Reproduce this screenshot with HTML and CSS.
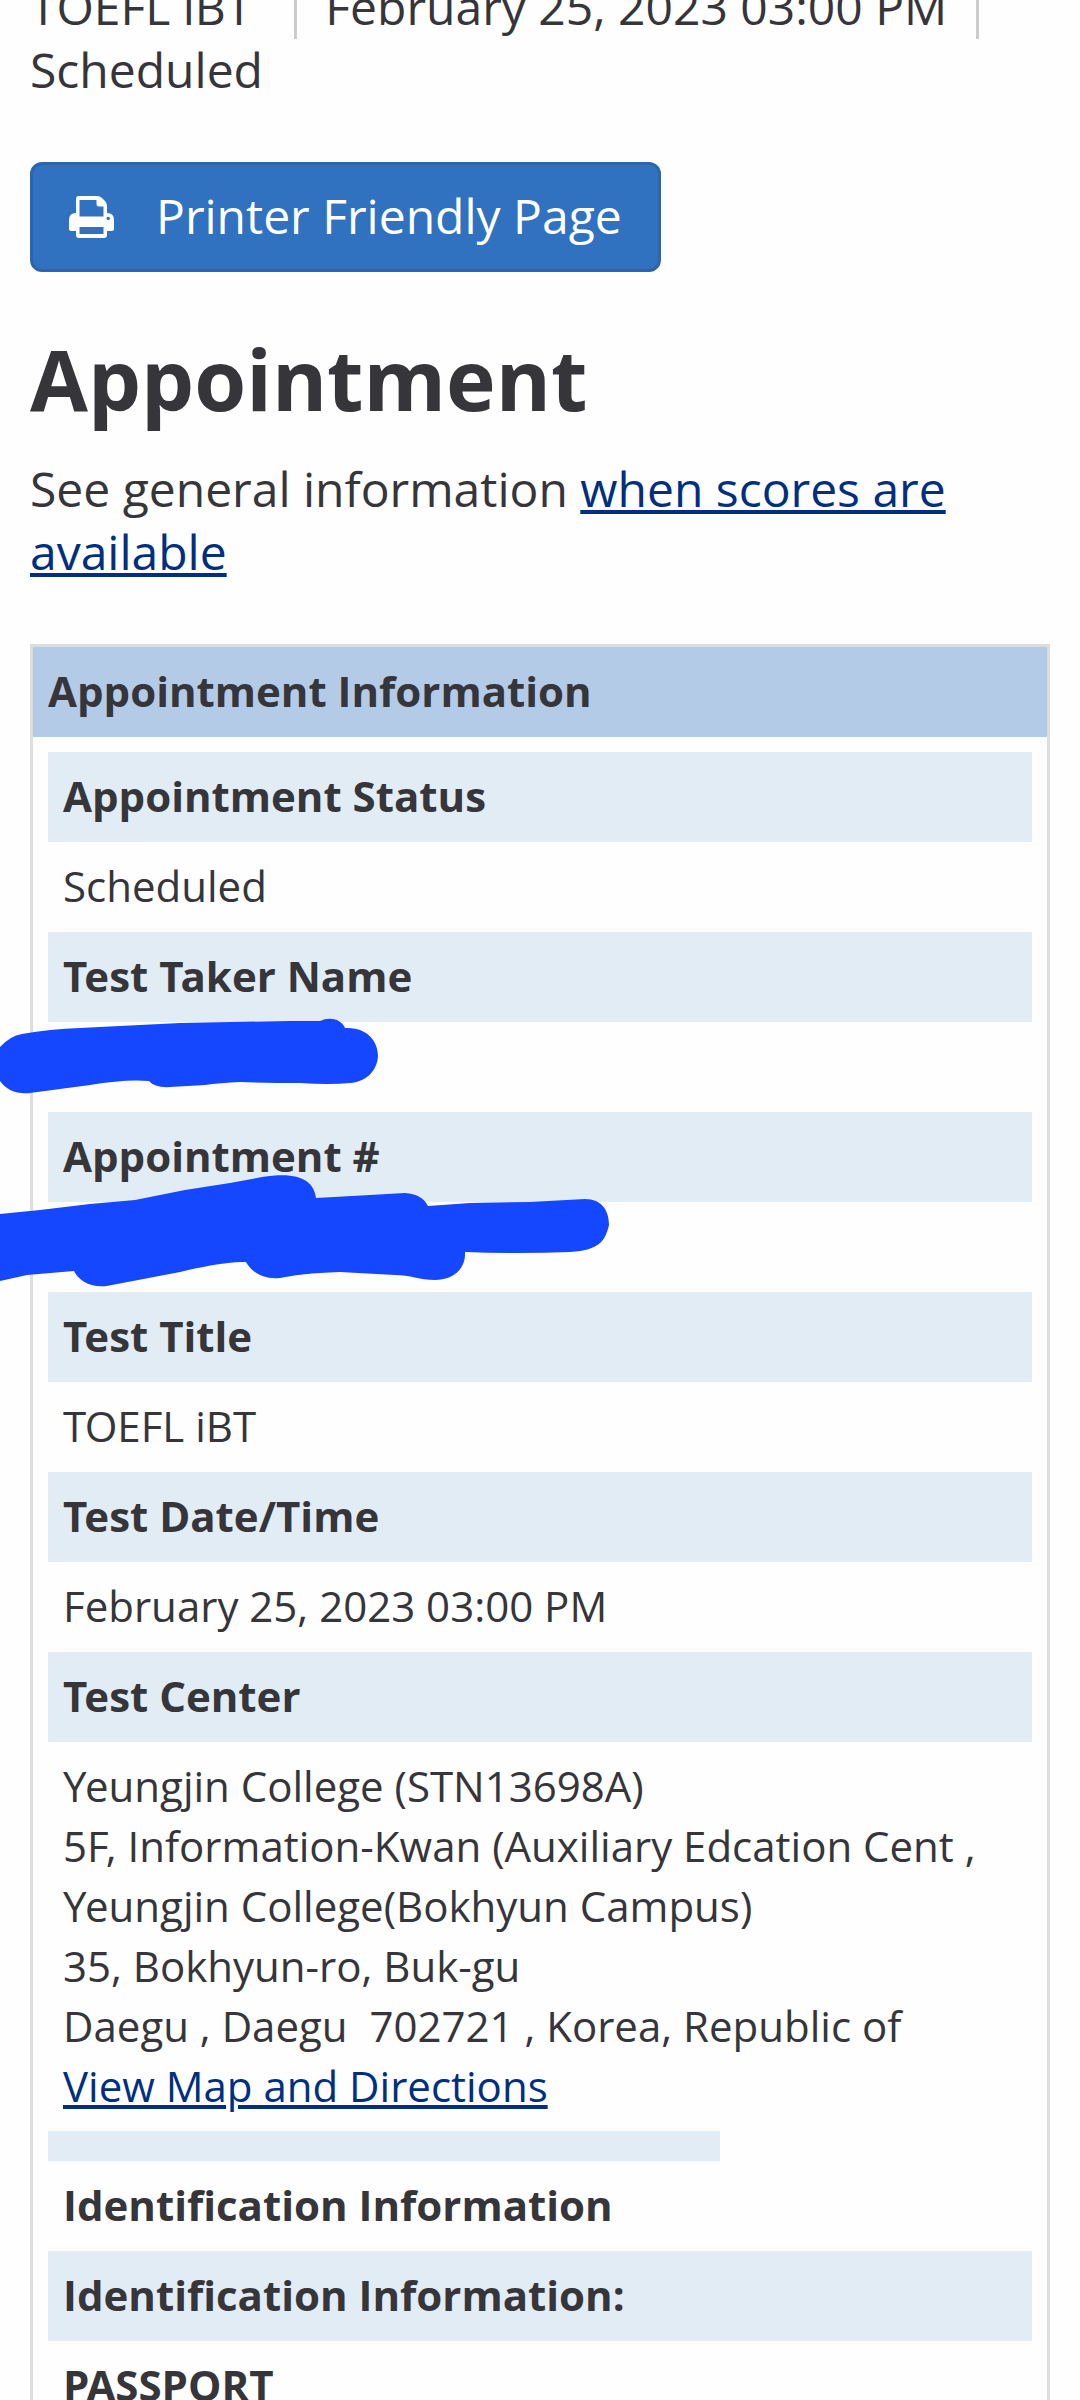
FILE: index.html
```
<!DOCTYPE html>
<html lang="en">

<head>
  <meta charset="UTF-8">
  <meta name="viewport" content="width=device-width, initial-scale=1.0">
  <title>Appointment</title>
  <link rel="stylesheet" href="styles.css">
</head>

<body>
  <div class="page">
    <div class="summary">
      <span class="summary-item">TOEFL iBT</span><span class="summary-item date">February 25, 2023 03:00 PM</span>
      <span>Scheduled</span>
    </div>

    <button class="print-button">
      <svg class="print-icon" viewBox="0 0 45 42">
        <path fill="#fff" fill-rule="evenodd" d="M10 0H28Q31 0 33 2L36 5Q38 7 38 10V17Q45 17 45 24V33Q45 35 43 35H38V39Q38 42 35 42H10Q7 42 7 39V35H2Q0 35 0 33V24Q0 17 7 17V3Q7 0 10 0ZM10.500 4V20.500H34.500V10.500H30Q27.500 10.500 27.500 8V4ZM10.500 31V38H34.500V31ZM39.200 20.700a1.700 1.700 0 1 0 .01 0Z"/>
      </svg>
      <span class="print-text">Printer Friendly Page</span>
    </button>

    <h1>Appointment</h1>
    <p class="info">See general information <a href="#">when scores are available</a></p>

    <div class="panel">
      <div class="panel-title">Appointment Information</div>
      <div class="panel-body">
        <div class="row label">Appointment Status</div>
        <div class="row">Scheduled</div>
        <div class="row label"><span class="kern">T</span>est <span class="kern">T</span>aker Name</div>
        <div class="row"></div>
        <div class="row label">Appointment #</div>
        <div class="row"></div>
        <div class="row label"><span class="kern">T</span>est Title</div>
        <div class="row"><span class="kern-small">T</span>OEFL iBT</div>
        <div class="row label"><span class="kern">T</span>est Date/Time</div>
        <div class="row">February 25, 2023 03:00 PM</div>
        <div class="row label"><span class="kern">T</span>est Center</div>
        <div class="row address">
          <span class="kern-small">Y</span>eungjin College (STN13698A)<br>
          5<span class="kern">F</span>, Information-Kwan (Auxiliary Edcation Cent ,<br>
          <span class="kern-small">Y</span>eungjin College(Bokhyun Campus)<br>
          35, Bokhyun-ro, Buk-gu<br>
          Daegu , Daegu&nbsp; 702721 , Korea, Republic of<br>
          <a href="#">View Map and Directions</a>
        </div>
        <div class="spacer"></div>
        <div class="row bold">Identification Information</div>
        <div class="row label">Identification Information:</div>
        <div class="row bold"><span class="kern">P</span>ASSPORT</div>
      </div>
    </div>
  </div>

  <!-- marker strokes over the name and the appointment number -->
  <svg class="marker" viewBox="0 0 620 290">
    <path d="M0 47Q10 36 22 34Q50 29 80 28L180 23L290 21L320 21Q328 17 337 20Q343 23 345 28C370 27 378 44 378 56C377 72 365 82 350 83Q330 85 300 83Q270 83 240 82Q220 83 205 85L170 87Q155 88 149 81Q125 79 90 85L30 93Q10 95 0 81Z"/>
    <path d="M0 214L40 210L90 204L135 200L185 190L230 183L262 177C298 171 314 180 316 198L370 195L405 193Q422 194 428 206L470 203L530 202L585 199C602 199 609 211 609 225C605 241 600 250 570 252Q520 254 465 252C466 270 452 280 435 280C420 280 410 275 395 275L340 272C310 273 295 275 280 278C262 280 250 270 246 262C230 261 200 267 180 272L112 285C92 290 78 280 74 271Q50 273 27 275L0 281Z"/>
  </svg>
</body>

</html>
```
FILE: styles.css
```
html {
  overflow: hidden;
}

body {
  position: relative;
  margin: 0;
  height: 2400px;
  overflow: hidden;
  background-color: #fefefe;
  color: #35353a;
  font-family: "Open Sans", sans-serif;
  font-size: 48px;
  line-height: 63px;
}

.page {
  margin-top: -25px;
  padding: 0 30px;
}

.summary-item {
  padding-right: 42px;
  border-right: 3px solid #ccc;
}

.date {
  padding-left: 28px;
  padding-right: 29px;
}

.print-button {
  display: flex;
  align-items: center;
  gap: 42px;
  width: 631px;
  height: 110px;
  margin-top: 61px;
  padding: 0 36px;
  border: 3px solid #2a65ae;
  border-radius: 12px;
  background-color: #3072c0;
  color: #fff;
  font: inherit;
}

.print-icon {
  width: 45px;
  height: 42px;
}

.print-text {
  padding-bottom: 3px;
}

h1 {
  margin: 60px 0 32px;
  font-size: 84px;
  line-height: 93px;
}

.info {
  margin: 0 0 61px;
}

a {
  color: #002f80;
  text-decoration-thickness: 4px;
  text-underline-offset: 3px;
}

.panel {
  border: 3px solid #ddd;
  font-size: 42px;
  line-height: 60px;
}

.panel-title {
  padding: 14px 15px 16px;
  background-color: #b4cbe7;
  font-weight: bold;
}

.panel-body {
  padding: 15px;
}

.row {
  min-height: 60px;
  padding: 14px 15px 16px;
}

.label {
  background-color: #e1ecf4;
  font-weight: bold;
}

.bold {
  font-weight: bold;
}

/* tighter pairs: Te, Ta, PA, Ye */
.kern {
  letter-spacing: -3px;
}

.kern-small {
  letter-spacing: -1.5px;
}

.address {
  padding-bottom: 15.6px;
  line-height: 59.9px;
}

.spacer {
  width: 672px;
  height: 30px;
  background-color: #e1ecf4;
}

.marker {
  position: absolute;
  left: 0;
  top: 1000px;
  width: 620px;
  height: 290px;
  fill: #1447ff;
}
```
